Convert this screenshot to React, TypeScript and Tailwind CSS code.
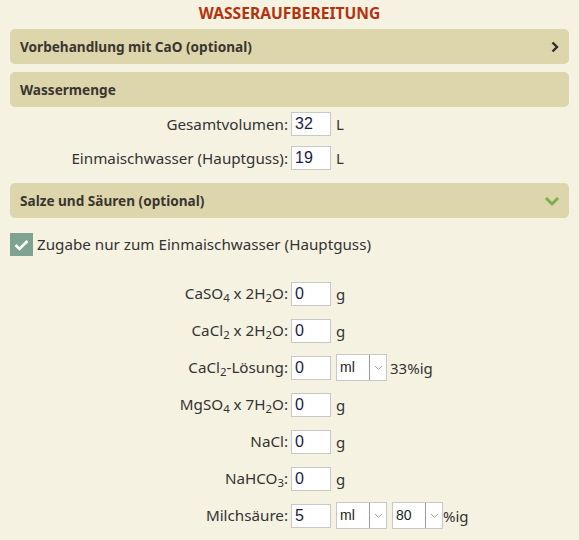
import { ReactNode } from "react"

const labelFont = { fontFamily: '"Noto Sans", "DejaVu Sans", sans-serif' }

function Bar({ title, icon }: { title: string; icon?: ReactNode }) {
  return (
    <div className="flex h-[35px] items-center justify-between rounded-[5px] bg-[#ddd5ab] pl-[10px] pr-[9px]">
      <span className="text-[13.6px] font-bold text-[#3a3530]">{title}</span>
      {icon}
    </div>
  )
}

function NumInput({ value }: { value: string }) {
  return (
    <div
      className="flex h-[24px] w-[40px] items-center border border-[#c8c8c8] bg-white px-[3px] text-[16px] text-[#1c1c4a]"
      style={{ fontFamily: '"Liberation Sans", Arial, sans-serif' }}
    >
      {value}
    </div>
  )
}

function Select({ value }: { value: string }) {
  return (
    <div
      className="flex h-[27px] w-[51px] items-center border border-[#c8c8c8] bg-white text-[14px] text-[#1c1c1c]"
      style={{ fontFamily: '"Liberation Sans", Arial, sans-serif' }}
    >
      <span className="flex-1 pl-[3px]">{value}</span>
      <span className="flex h-full w-[17px] items-center justify-center border-l border-[#999]">
        <svg width="9" height="6" viewBox="0 0 9 6" fill="none">
          <path d="M1 1l3.5 3.5L8 1" stroke="#aaa" strokeWidth="1" />
        </svg>
      </span>
    </div>
  )
}

function Row({ label, children, h = "h-[34px]" }: { label: ReactNode; children: ReactNode; h?: string }) {
  return (
    <div className={`flex items-center ${h}`}>
      <div className="w-[281px] pr-[3px] text-right text-[15.2px] text-[#333]">{label}</div>
      <div className="flex items-center gap-[5px] text-[15px] text-[#333]">{children}</div>
    </div>
  )
}

export default function App() {
  return (
    <div className="min-h-[540px] w-[579px] bg-[#f6f2e2] px-[10px]" style={labelFont}>
      <h1 className="pt-[2px] text-center text-[15.6px] font-bold text-[#b3330e]">
        WASSERAUFBEREITUNG
      </h1>

      <div className="mt-[4px]">
        <Bar
          title="Vorbehandlung mit CaO (optional)"
          icon={
            <svg width="10" height="12" viewBox="0 0 10 12" fill="none">
              <path d="M2.5 1.5l4.5 4.5-4.5 4.5" stroke="#2d2d2d" strokeWidth="2.4" />
            </svg>
          }
        />
      </div>

      <div className="mt-[8px]">
        <Bar title="Wassermenge" />
      </div>

      <div>
        <Row label="Gesamtvolumen:">
          <NumInput value="32" />
          <span>L</span>
        </Row>
        <Row label="Einmaischwasser (Hauptguss):">
          <NumInput value="19" />
          <span>L</span>
        </Row>
      </div>

      <div className="mt-[8px]">
        <Bar
          title="Salze und Säuren (optional)"
          icon={
            <svg width="16" height="12" viewBox="0 0 16 12" fill="none">
              <path d="M2 3l6 6 6-6" stroke="#7bb04a" strokeWidth="3" />
            </svg>
          }
        />
      </div>

      <label className="mt-[15px] flex items-center gap-[4px] text-[15.2px] text-[#333]">
        <span className="flex h-[23px] w-[23px] items-center justify-center bg-[#7fa393]">
          <svg width="15" height="12" viewBox="0 0 15 12" fill="none">
            <path d="M1.5 6l4 4 8-8" stroke="#fff" strokeWidth="2.6" />
          </svg>
        </span>
        Zugabe nur zum Einmaischwasser (Hauptguss)
      </label>

      <div className="mt-[24px] flex flex-col gap-[10px]">
        <Row label={<>CaSO<sub>4</sub> x 2H<sub>2</sub>O:</>} h="h-[27px]">
          <NumInput value="0" />
          <span>g</span>
        </Row>
        <Row label={<>CaCl<sub>2</sub> x 2H<sub>2</sub>O:</>} h="h-[27px]">
          <NumInput value="0" />
          <span>g</span>
        </Row>
        <Row label={<>CaCl<sub>2</sub>-Lösung:</>} h="h-[27px]">
          <NumInput value="0" />
          <Select value="ml" />
          <span className="-ml-[2px]">33%ig</span>
        </Row>
        <Row label={<>MgSO<sub>4</sub> x 7H<sub>2</sub>O:</>} h="h-[27px]">
          <NumInput value="0" />
          <span>g</span>
        </Row>
        <Row label="NaCl:" h="h-[27px]">
          <NumInput value="0" />
          <span>g</span>
        </Row>
        <Row label={<>NaHCO<sub>3</sub>:</>} h="h-[27px]">
          <NumInput value="0" />
          <span>g</span>
        </Row>
        <Row label="Milchsäure:" h="h-[27px]">
          <NumInput value="5" />
          <Select value="ml" />
          <Select value="80" />
          <span className="-ml-[5px]">%ig</span>
        </Row>
      </div>
    </div>
  )
}
